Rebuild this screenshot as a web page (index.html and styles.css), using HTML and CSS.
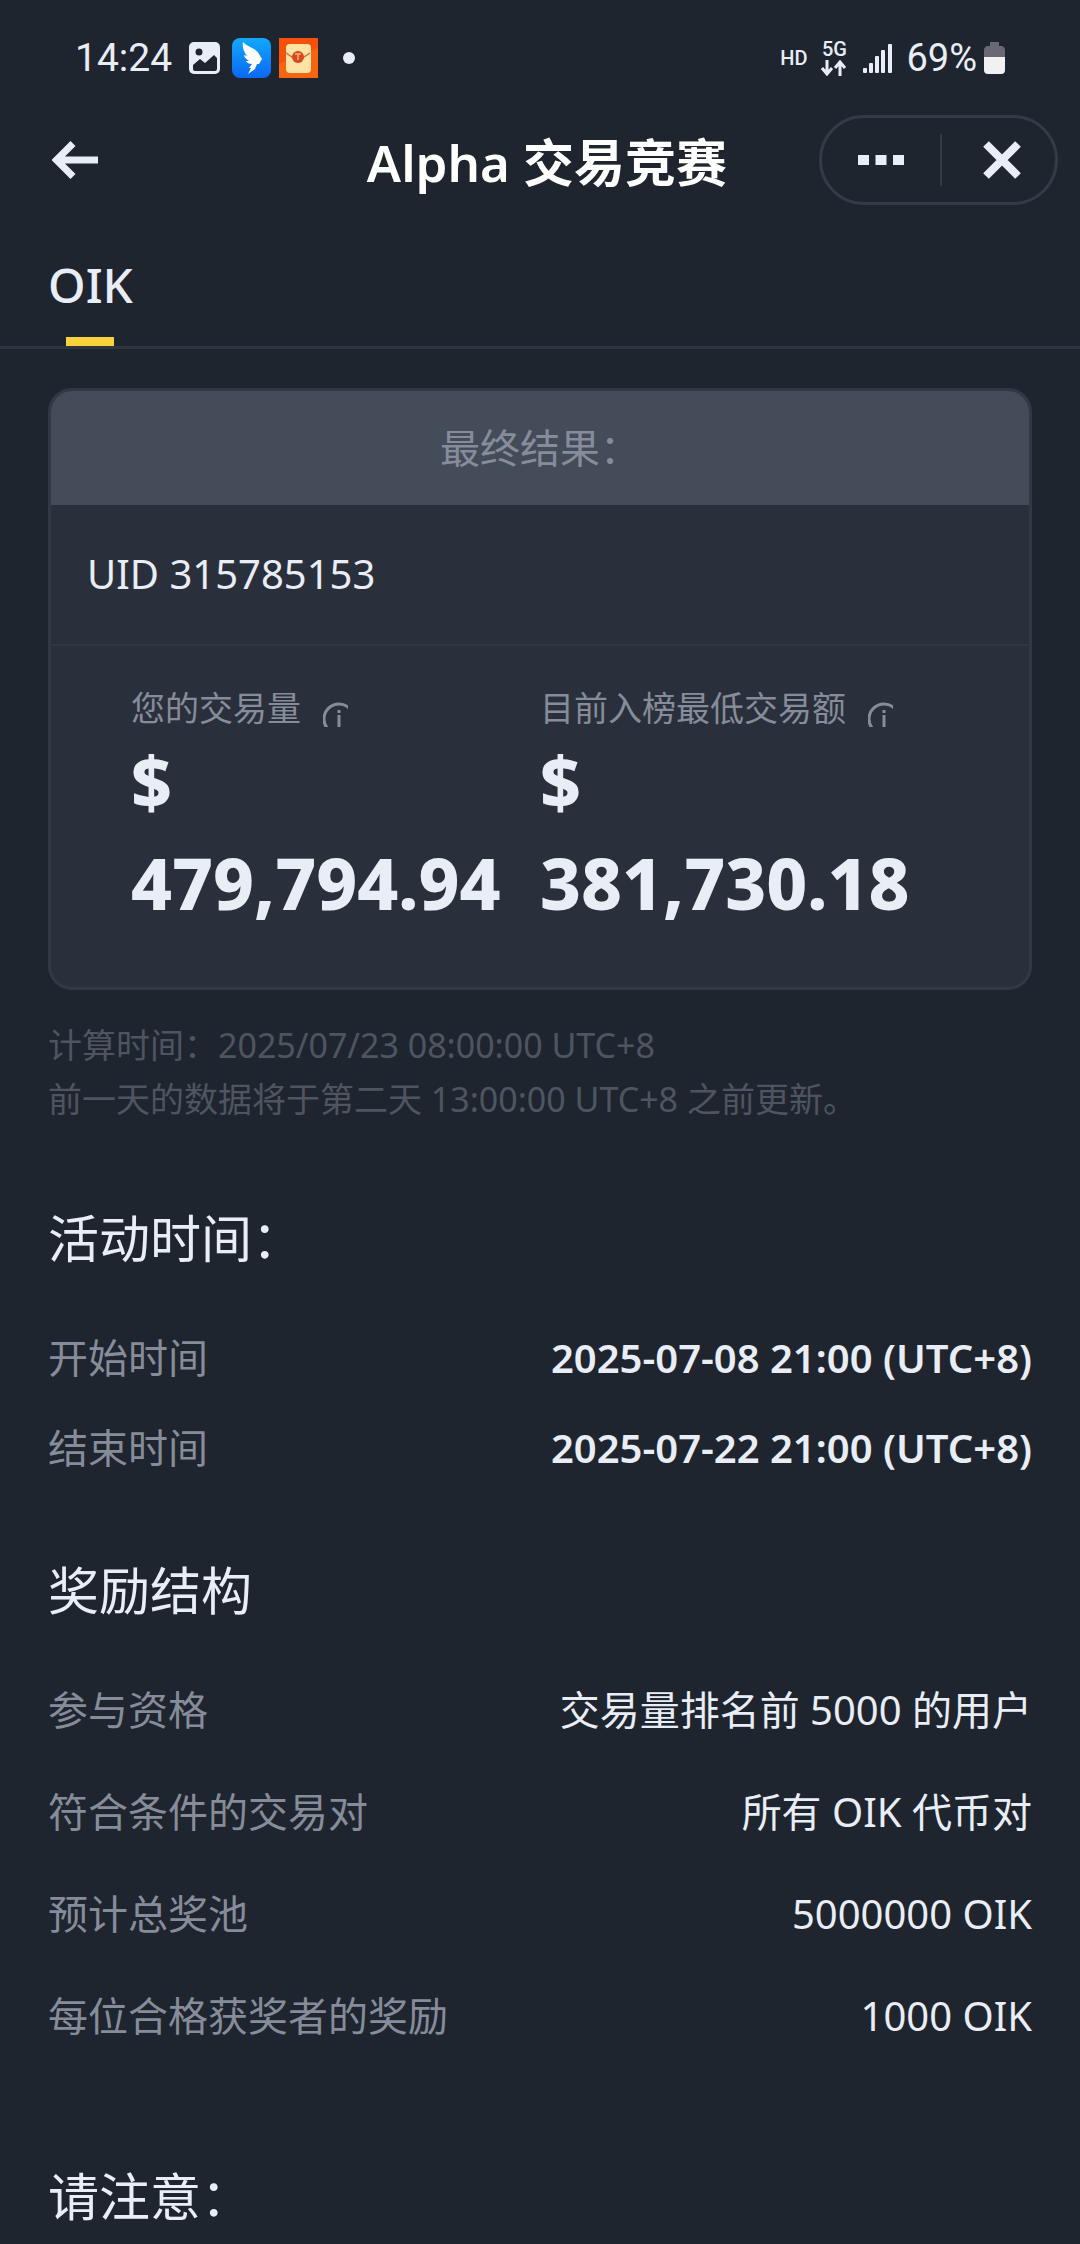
FILE: index.html
```html
<!DOCTYPE html>
<html lang="zh-CN">
<head>
    <meta charset="UTF-8">
    <meta name="viewport" content="width=device-width, initial-scale=1.0">
    <title>Alpha 交易竞赛</title>
    <link rel="stylesheet" href="styles.css">
</head>
<body>
    <div class="status-bar">
        <div class="status-left">
            <span class="clock">14:24</span>
            <svg class="icon-image" width="31" height="32" viewBox="0 0 31 32">
                <rect width="31" height="32" rx="5" fill="#e9edf6"/>
                <circle cx="10" cy="10" r="3.5" fill="#1e252e"/>
                <path d="M4 23l7-6 5 4 9-8 3 3v11q0 2-2 2H6q-2 0-2-2z" fill="#1e252e"/>
            </svg>
            <svg class="icon-bird" width="39" height="40" viewBox="0 0 39 40">
                <defs>
                    <linearGradient id="bird-bg" x1="0" y1="0" x2="0" y2="1">
                        <stop offset="0" stop-color="#12a8fb"/>
                        <stop offset="1" stop-color="#0b68f5"/>
                    </linearGradient>
                </defs>
                <rect width="39" height="40" rx="8" fill="url(#bird-bg)"/>
                <path d="M11 4c4 5 13 6 16 12 1 2 2 3 3 5l-3 5h-2l-2 5-7 5 3-6h-2l3-4c-3 0-5-1-6-3l3 0c-3-2-5-4-5-6l3 1c-3-4-5-9-4-14z" fill="#fff"/>
            </svg>
            <svg width="39" height="40" viewBox="0 0 39 40">
                <rect width="39" height="40" fill="#f5510d"/>
                <path d="M0 40V26l39-16v30z" fill="#fb7a14" opacity="0.5"/>
                <rect x="7" y="6" width="25" height="29" rx="4" fill="#fee3a4"/>
                <path d="M7 15l9 6h6l9-6" fill="none" stroke="#cf6a3a" stroke-width="1.5"/>
                <circle cx="19" cy="19" r="6" fill="#d8491d"/>
                <path d="M16 16h6M19 16v6" stroke="#f6ae77" stroke-width="1.5"/>
            </svg>
            <span class="dot"></span>
        </div>
        <div class="status-right">
            <span class="hd">HD</span>
            <div class="network">
                <span>5G</span>
                <svg width="26" height="16" viewBox="0 0 26 16" fill="none" stroke="#e9edf6" stroke-width="3">
                    <path d="M6 0v14M1 8l5 6 5-6M19 16V2M14 8l5-6 5 6"/>
                </svg>
            </div>
            <svg class="signal" width="29" height="29" viewBox="0 0 29 29" fill="#e9edf6">
                <rect x="0" y="24" width="4" height="5" rx="1"/>
                <rect x="6" y="19" width="4" height="10" rx="1"/>
                <rect x="12" y="12" width="4" height="17" rx="1"/>
                <rect x="18" y="6" width="4" height="23" rx="1"/>
                <rect x="25" y="0" width="4" height="29" rx="1"/>
            </svg>
            <span class="battery-text">69%</span>
            <svg width="21" height="32" viewBox="0 0 21 32">
                <path d="M6 0h9v4h3q3 1 3 4v7H0V8q0-3 3-4h3z" fill="#686972"/>
                <path d="M0 15h21v13q0 4-4 4H4q-4 0-4-4z" fill="#f1f1f3"/>
            </svg>
        </div>
    </div>

    <header class="header">
        <button class="back-btn" aria-label="返回">
            <svg width="46" height="38" viewBox="0 0 46 38" fill="none" stroke="#e9edf6" stroke-width="7">
                <path d="M46 19H5M21 2.500L4.500 19 21 35.500"/>
            </svg>
        </button>
        <h1>Alpha 交易竞赛</h1>
        <div class="capsule">
            <button class="more-btn" aria-label="更多">
                <svg width="46" height="10" viewBox="0 0 46 10" fill="#e9edf6">
                    <path d="M0 0h11v10H0zM17.500 0h11v10h-11zM35 0h11v10H35z"/>
                </svg>
            </button>
            <button class="close-btn" aria-label="关闭">
                <svg width="38" height="38" viewBox="0 0 38 38" stroke="#e9edf6" stroke-width="8">
                    <path d="M3 3l32 32M35 3L3 35"/>
                </svg>
            </button>
        </div>
    </header>

    <nav class="tabs">
        <a class="tab active" href="#oik">OIK</a>
    </nav>

    <main id="oik">
        <div class="card">
            <div class="card-title">最终结果：</div>
            <div class="uid">UID 315785153</div>
            <div class="stats">
                <div class="stat">
                    <div class="stat-label">您的交易量
                        <svg width="25" height="25" viewBox="0 0 25 25" fill="none" stroke="#868c99" stroke-width="3">
                            <circle cx="16" cy="17" r="15"/>
                            <path d="M16 8v3M16 13v12"/>
                        </svg>
                    </div>
                    <div class="stat-value">$ 479,794.94</div>
                </div>
                <div class="stat">
                    <div class="stat-label">目前入榜最低交易额
                        <svg width="25" height="25" viewBox="0 0 25 25" fill="none" stroke="#868c99" stroke-width="3">
                            <circle cx="16" cy="17" r="15"/>
                            <path d="M16 8v3M16 13v12"/>
                        </svg>
                    </div>
                    <div class="stat-value">$ 381,730.18</div>
                </div>
            </div>
        </div>

        <div class="note">
            <p>计算时间：2025/07/23 08:00:00 UTC+8</p>
            <p>前一天的数据将于第二天 13:00:00 UTC+8 之前更新。</p>
        </div>

        <section>
            <h2>活动时间：</h2>
            <dl class="rows dates">
                <div class="row"><dt>开始时间</dt><dd>2025-07-08 21:00 (UTC+8)</dd></div>
                <div class="row"><dt>结束时间</dt><dd>2025-07-22 21:00 (UTC+8)</dd></div>
            </dl>
        </section>

        <section>
            <h2>奖励结构</h2>
            <dl class="rows">
                <div class="row"><dt>参与资格</dt><dd>交易量排名前 5000 的用户</dd></div>
                <div class="row"><dt>符合条件的交易对</dt><dd>所有 OIK 代币对</dd></div>
                <div class="row"><dt>预计总奖池</dt><dd>5000000 OIK</dd></div>
                <div class="row"><dt>每位合格获奖者的奖励</dt><dd>1000 OIK</dd></div>
            </dl>
        </section>

        <section class="notice">
            <h2>请注意：</h2>
        </section>
    </main>
</body>
</html>
```
FILE: styles.css
```css
* {
    box-sizing: border-box;
}

body {
    margin: 0;
    background-color: #1e252e;
    color: #e9edf6;
    font-family: "Noto Sans", "Noto Sans CJK SC", sans-serif;
    font-size: 40px;
    line-height: 60px;
}

h1, h2, p, dl, dd {
    margin: 0;
}

button {
    display: flex;
    align-items: center;
    justify-content: center;
    padding: 0;
    border: none;
    background: none;
    cursor: pointer;
}

svg {
    display: block;
    flex-shrink: 0;
}

/* status bar */
.status-bar {
    display: flex;
    justify-content: space-between;
    align-items: center;
    padding: 38px 75px 37px;
    font-family: Roboto, sans-serif;
    line-height: 40px;
}

.status-left,
.status-right {
    display: flex;
    align-items: center;
}

.clock {
    font-size: 39px;
}

.icon-image {
    margin-left: 17px;
}

.icon-bird {
    margin: 0 8px 0 12px;
}

.dot {
    width: 12px;
    height: 12px;
    margin-left: 25px;
    border-radius: 50%;
    background-color: #e9edf6;
}

.hd {
    font-size: 20px;
    font-weight: 500;
}

.network {
    display: flex;
    flex-direction: column;
    align-items: center;
    gap: 2px;
    margin: 0 16px 0 14px;
    font-size: 20px;
    font-weight: 500;
    line-height: 18px;
}

.signal {
    margin-right: 14px;
}

.battery-text {
    margin-right: 7px;
    font-size: 38px;
}

/* header */
.header {
    display: grid;
    grid-template-columns: 1fr auto 1fr;
    align-items: center;
    padding: 0 22px 0 36px;
}

.header h1 {
    padding-top: 4px;
    font-size: 51px;
    font-weight: 600;
    color: #fff;
}

.back-btn {
    justify-self: start;
    padding: 16px;
}

.capsule {
    display: flex;
    justify-self: end;
    width: 239px;
    height: 90px;
    padding: 16px 0;
    border: 3px solid #343b46;
    border-radius: 45px;
}

.more-btn {
    width: 118px;
}

.close-btn {
    flex: 1;
    padding-left: 6px;
    border-left: 2px solid #343b46;
}

/* tabs */
.tabs {
    display: flex;
    padding: 48px 48px 0;
    border-bottom: 3px solid #2e3540;
}

.tab {
    color: #e9edf6;
    font-size: 48px;
    font-weight: 500;
    line-height: 64px;
    text-decoration: none;
}

.tab.active::after {
    content: "";
    display: block;
    width: 48px;
    height: 9px;
    margin: 20px auto 0;
    background-color: #f8d33a;
}

main {
    padding: 39px 48px 0;
}

/* result card */
.card {
    border: 3px solid #323945;
    border-radius: 24px;
    background-color: #2a303b;
    overflow: hidden;
}

.card-title {
    padding: 27px;
    background-color: #444b59;
    color: #868c99;
    text-align: center;
}

.uid {
    padding: 39px 36px 40px;
    border-bottom: 2px solid #303742;
}

.stats {
    display: grid;
    grid-template-columns: 1fr 1fr;
    padding: 40px 80px 53px;
}

.stat-label {
    display: flex;
    align-items: flex-end;
    gap: 22px;
    color: #868c99;
    font-size: 34px;
    line-height: 44px;
}

.stat-label svg {
    margin-bottom: 3px;
}

.stat-value {
    width: min-content;
    font-size: 71px;
    font-weight: 800;
    line-height: 102px;
}

.note {
    margin-top: 28px;
    color: #4f5560;
    font-size: 34px;
    line-height: 54px;
}

/* info sections */
section {
    margin-top: 78px;
}

h2 {
    margin-bottom: 56px;
    font-size: 51px;
    font-weight: 400;
    line-height: 68px;
}

.rows {
    display: flex;
    flex-direction: column;
    gap: 42px;
}

.dates {
    gap: 30px;
}

.dates dd {
    font-weight: 600;
}

.row {
    display: flex;
    justify-content: space-between;
}

.row dt {
    color: #868c99;
}

.notice {
    margin-top: 116px;
}

.notice h2 {
    margin-bottom: 0;
}
```
